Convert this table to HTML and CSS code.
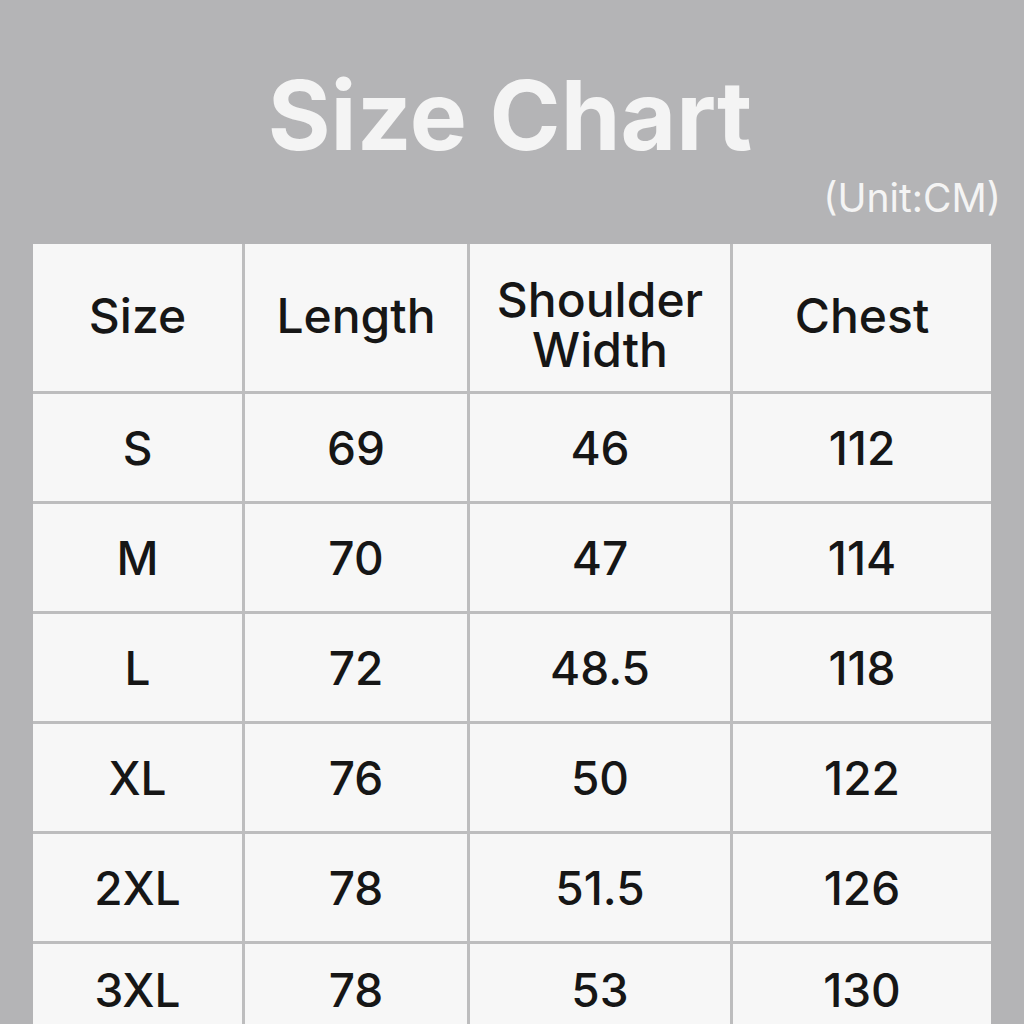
FILE: index.html
```html
<!DOCTYPE html>
<html>
<head>
<meta charset="utf-8">
<link rel="stylesheet" href="styles.css">
</head>
<body>
<div class="page">
  <h1 class="title">Size Chart</h1>
  <div class="unit">(Unit:CM)</div>
  <div class="chart">
    <div class="cell head">Size</div>
    <div class="cell head">Length</div>
    <div class="cell head two">Shoulder<br>Width</div>
    <div class="cell head">Chest</div>

    <div class="cell">S</div><div class="cell">69</div><div class="cell">46</div><div class="cell">112</div>
    <div class="cell">M</div><div class="cell">70</div><div class="cell">47</div><div class="cell">114</div>
    <div class="cell">L</div><div class="cell">72</div><div class="cell">48.5</div><div class="cell">118</div>
    <div class="cell">XL</div><div class="cell">76</div><div class="cell">50</div><div class="cell">122</div>
    <div class="cell">2XL</div><div class="cell">78</div><div class="cell">51.5</div><div class="cell">126</div>
    <div class="cell last">3XL</div><div class="cell last">78</div><div class="cell last">53</div><div class="cell last">130</div>
  </div>
</div>
</body>
</html>
```
FILE: styles.css
```css
html, body {
  margin: 0;
  padding: 0;
  background: #b4b4b6;
}
body {
  width: 1024px;
  height: 1024px;
  overflow: hidden;
  font-family: Inter, "Liberation Sans", sans-serif;
}
.page {
  padding-top: 67px;
}
.title {
  margin: 0;
  font-size: 96px;
  line-height: 96px;
  font-weight: 700;
  color: #f4f4f4;
  text-align: center;
  padding-right: 4px;
}
.unit {
  margin-top: 15px;
  font-size: 39px;
  line-height: 39px;
  color: #f4f4f4;
  text-align: right;
  padding-right: 23px;
}
.chart {
  margin-top: 27px;
  margin-left: 33px;
  width: 958px;
  display: grid;
  grid-template-columns: 209px 222px 260px 258px;
  grid-template-rows: 147px repeat(6, 107px);
  gap: 3px;
  background: #bdbdbe;
}
.cell {
  background: #f7f7f7;
  display: flex;
  align-items: center;
  justify-content: center;
  text-align: center;
  font-size: 46px;
  font-weight: 500;
  color: #161616;
  line-height: 50px;
}
.head {
  font-size: 48px;
  padding-bottom: 4px;
}
.two {
  padding-bottom: 0;
  padding-top: 14px;
}
.last {
  padding-bottom: 16px;
}
```
